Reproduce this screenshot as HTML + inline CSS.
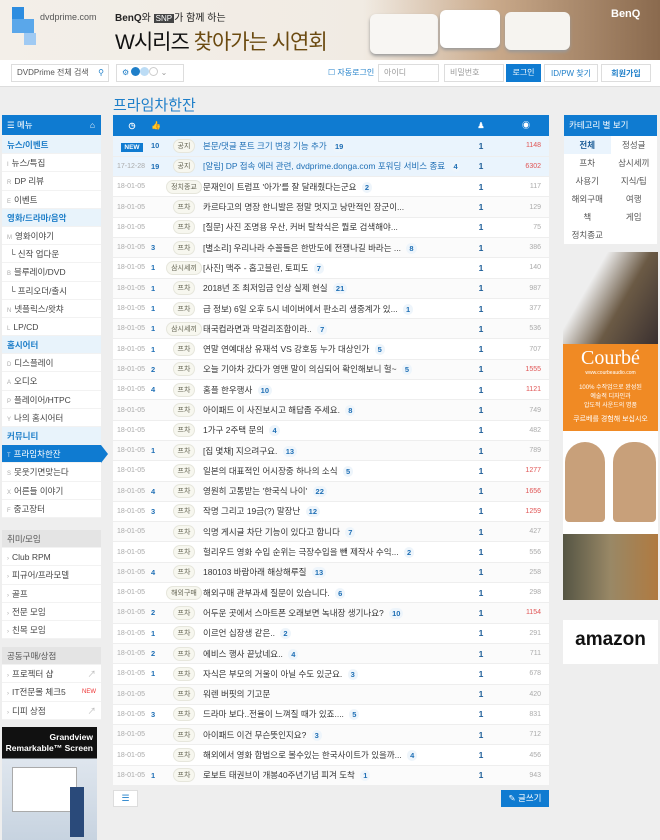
<!DOCTYPE html>
<html><head><meta charset="utf-8">
<style>
*{box-sizing:border-box;margin:0;padding:0}
body{width:660px;height:840px;overflow:hidden;background:#eee;font-family:"Liberation Sans","Noto Sans CJK KR",sans-serif;font-size:9px;color:#333;position:relative}
.abs{position:absolute}
#banner{left:0;top:0;width:660px;height:60px;background:linear-gradient(90deg,#f3efe9 0%,#f1ebe3 55%,#c9a98a 75%,#8a6a4e 100%)}
#bar{left:0;top:60px;width:660px;height:27px;background:#fff;border-bottom:1px solid #ddd}
.inp{position:absolute;top:64px;height:18px;border:1px solid #ddd;background:#fff;font-size:8px;color:#999;line-height:16px;padding-left:5px}
.btn{position:absolute;top:64px;height:18px;font-size:8px;line-height:18px;text-align:center}
.side{position:absolute;left:2px;width:99px;background:#fff}
.side div{height:18.2px;line-height:18px;padding-left:5px;font-size:8.5px;color:#444;border-bottom:1px solid #f2f2f2}
.side .sec{background:#e8f3fb;color:#1f7fc9;font-weight:bold}
.side .l{color:#aaa;font-size:6px;margin-right:3px}
.side .gh{background:#e4e4e4;color:#555}
table{border-collapse:collapse;width:436px;position:absolute;left:113px;top:115px;background:#fff;table-layout:fixed}
th{background:#0f7bd1;height:21px;color:#fff;font-size:8px}
td{height:20.3px;border-bottom:1px solid #eee;white-space:nowrap;overflow:hidden;font-size:8.5px}
tr:nth-child(odd) td{background:#fbfbfb}
tr.n td{background:#eaf4fd}
.d{color:#aaa;font-size:7px;padding-left:4px}
.r{color:#1f6fb5;font-weight:bold;font-size:7.5px}
.c{text-align:center}
.b{display:inline-block;border:1px solid #e6e6dc;background:#f7f7ef;border-radius:8px;font-size:7px;color:#665;padding:1px 4px}
.t{color:#333}
.cm{display:inline-block;background:#eef5fb;border-radius:7px;color:#1f6fb5;font-weight:bold;font-size:7.5px;padding:1px 3px;margin-left:3px}
.u{text-align:center;color:#1f5f99;font-weight:bold}
.v{text-align:right;padding-right:8px;color:#aaa;font-size:7px}
.hot{color:#e05555}
#cat{left:564px;top:115px;width:93px;background:#fff}
#cat .h{background:#0f7bd1;color:#fff;height:21px;line-height:21px;padding-left:5px;font-size:8.5px}
#cat .g{display:grid;grid-template-columns:1fr 1fr}
#cat .g div{height:18px;line-height:18px;text-align:center;font-size:8.5px;color:#555}
</style></head><body>
<div id="banner" class="abs">
 <div class="abs" style="left:12px;top:7px;width:12px;height:12px;background:#2d8de0"></div>
 <div class="abs" style="left:12px;top:19px;width:22px;height:14px;background:#5aa7ea"></div>
 <div class="abs" style="left:24px;top:33px;width:12px;height:12px;background:#9fcaf3"></div>
 <div class="abs" style="left:40px;top:12px;font-size:9px;color:#555">dvdprime.com</div>
 <div class="abs" style="left:115px;top:9px;font-size:10px;color:#222"><b>BenQ</b>와 <span style="background:#444;color:#fff;font-size:8px;padding:0 2px">SNP</span>가 함께 하는</div>
 <div class="abs" style="left:115px;top:26px;font-size:21px;color:#111;letter-spacing:-1px">W시리즈 <span style="color:#6b4a10">찾아가는 시연회</span></div>
 <div class="abs" style="left:370px;top:14px;width:68px;height:40px;background:#f8f6f3;border-radius:6px;box-shadow:0 2px 3px #999"></div>
 <div class="abs" style="left:440px;top:10px;width:60px;height:38px;background:#fff;border-radius:6px;box-shadow:0 2px 3px #999"></div>
 <div class="abs" style="left:505px;top:12px;width:65px;height:38px;background:#f6f4f0;border-radius:6px;box-shadow:0 2px 3px #999"></div>
 <div class="abs" style="left:611px;top:8px;font-size:11px;color:#fff;font-weight:bold">BenQ</div>
</div>
<div id="bar" class="abs"></div>
<div class="inp" style="left:11px;width:98px;color:#555">DVDPrime 전체 검색 <span style="color:#1f7fc9;float:right;margin-right:4px">&#9906;</span></div>
<div class="inp" style="left:116px;width:68px;color:#1f7fc9">⚙ <span style="display:inline-block;width:9px;height:9px;border-radius:5px;background:#1f7fc9;vertical-align:-1px"></span><span style="display:inline-block;width:9px;height:9px;border-radius:5px;background:#bcdcf5;vertical-align:-1px"></span><span style="display:inline-block;width:9px;height:9px;border-radius:5px;border:1px solid #ccc;vertical-align:-1px"></span> <span style="color:#999">⌄</span></div>
<div class="btn" style="left:328px;color:#1f7fc9">☐ 자동로그인</div>
<div class="inp" style="left:378px;width:61px">아이디</div>
<div class="inp" style="left:444px;width:60px">비밀번호</div>
<div class="btn" style="left:506px;width:35px;background:#0f7bd1;color:#fff">로그인</div>
<div class="btn" style="left:544px;width:54px;border:1px solid #ddd;color:#1f7fc9;background:#fff">ID/PW 찾기</div>
<div class="btn" style="left:601px;width:50px;border:1px solid #ddd;color:#1f7fc9;background:#fff;font-weight:bold">회원가입</div>
<div class="abs" style="left:113px;top:94px;font-size:15px;color:#1f7fc9">프라임차한잔</div>

<div class="side" style="top:115px">
 <div style="background:#0f7bd1;color:#fff;height:21px;line-height:21px">☰ 메뉴<span style="float:right;margin-right:6px">⌂</span></div>
 <div class="sec">뉴스/이벤트</div>
 <div><span class="l">I</span>뉴스/특집</div>
 <div><span class="l">R</span>DP 리뷰</div>
 <div><span class="l">E</span>이벤트</div>
 <div class="sec">영화/드라마/음악</div>
 <div><span class="l">M</span>영화이야기</div>
 <div>&nbsp;└ 신작 업다운</div>
 <div><span class="l">B</span>블루레이/DVD</div>
 <div>&nbsp;└ 프리오더/출시</div>
 <div><span class="l">N</span>넷플릭스/왓챠</div>
 <div><span class="l">L</span>LP/CD</div>
 <div class="sec">홈시어터</div>
 <div><span class="l">D</span>디스플레이</div>
 <div><span class="l">A</span>오디오</div>
 <div><span class="l">P</span>플레이어/HTPC</div>
 <div><span class="l">Y</span>나의 홈시어터</div>
 <div class="sec">커뮤니티</div>
 <div style="background:#0f7bd1;color:#fff;position:relative"><span class="l" style="color:#cde">T</span>프라임차한잔<span style="position:absolute;right:-7px;top:0;border-left:7px solid #0f7bd1;border-top:9px solid transparent;border-bottom:9px solid transparent"></span></div>
 <div><span class="l">S</span>못웃기면맞는다</div>
 <div><span class="l">X</span>어른들 이야기</div>
 <div><span class="l">F</span>중고장터</div>
</div>
<div class="side" style="top:530px">
 <div class="gh">취미/모임</div>
 <div><span class="l">›</span>Club RPM</div>
 <div><span class="l">›</span>피규어/프라모델</div>
 <div><span class="l">›</span>골프</div>
 <div><span class="l">›</span>전문 모임</div>
 <div><span class="l">›</span>친목 모임</div>
</div>
<div class="side" style="top:647px">
 <div class="gh">공동구매/상점</div>
 <div><span class="l">›</span>프로젝터 샵<span style="float:right;margin-right:5px;color:#bbb">↗</span></div>
 <div><span class="l">›</span>IT전문몰 체크5<span style="float:right;margin-right:5px;color:#e33;font-size:6px">NEW</span></div>
 <div><span class="l">›</span>디피 상점<span style="float:right;margin-right:5px;color:#bbb">↗</span></div>
</div>
<div class="abs" style="left:2px;top:727px;width:95px;height:113px;background:linear-gradient(#111 0,#111 28%,#dfe6ee 28%,#c7d3e0 100%)">
 <div style="color:#fff;font-size:8.5px;text-align:right;padding:5px 4px 0 0;line-height:11px;font-weight:bold">Grandview<br>Remarkable™ Screen</div>
 <div class="abs" style="left:10px;top:40px;width:65px;height:45px;background:#fff;border:1px solid #aaa"></div>
 <div class="abs" style="left:68px;top:60px;width:14px;height:50px;background:#2a4a7a"></div>
</div>

<table>
<colgroup><col style="width:38px"><col style="width:14px"><col style="width:38px"><col style="width:256px"><col style="width:44px"><col style="width:46px"></colgroup>
<tr><th>◷</th><th style="text-align:left">👍</th><th></th><th></th><th>♟</th><th>◉</th></tr>
<tr class="n"><td class="c"><span style="background:#0f7bd1;color:#fff;font-size:6.5px;padding:1px 3px;font-weight:bold">NEW</span></td><td class="r">10</td><td class="c"><span class="b">공지</span></td><td style="color:#1f6fb5">본문/댓글 폰트 크기 변경 기능 추가 <span class="cm">19</span></td><td class="u">1</td><td class="v hot">1148</td></tr>
<tr class="n"><td class="d">17-12-28</td><td class="r">19</td><td class="c"><span class="b">공지</span></td><td style="color:#1f6fb5">[알림] DP 접속 에러 관련, dvdprime.donga.com 포워딩 서비스 종료 <span class="cm">4</span></td><td class="u">1</td><td class="v hot">6302</td></tr>
<tr><td class="d">18-01-05</td><td class="r"></td><td class="c"><span class="b">정치종교</span></td><td class="t">문재인이 트럼프 '아가'를 잘 달래줬다는군요 <span class="cm">2</span></td><td class="u">1</td><td class="v">117</td></tr>
<tr><td class="d">18-01-05</td><td class="r"></td><td class="c"><span class="b">프차</span></td><td class="t">카르타고의 명장 한니발은 정말 멋지고 낭만적인 장군이...</td><td class="u">1</td><td class="v">129</td></tr>
<tr><td class="d">18-01-05</td><td class="r"></td><td class="c"><span class="b">프차</span></td><td class="t">[질문] 사진 조명용 우산, 커버 탈착식은 뭘로 검색해야...</td><td class="u">1</td><td class="v">75</td></tr>
<tr><td class="d">18-01-05</td><td class="r">3</td><td class="c"><span class="b">프차</span></td><td class="t">[별소리] 우리나라 수꼴들은 한반도에 전쟁나길 바라는 ... <span class="cm">8</span></td><td class="u">1</td><td class="v">386</td></tr>
<tr><td class="d">18-01-05</td><td class="r">1</td><td class="c"><span class="b">삼시세끼</span></td><td class="t">[사진] 맥주 - 홉고블린, 토피도 <span class="cm">7</span></td><td class="u">1</td><td class="v">140</td></tr>
<tr><td class="d">18-01-05</td><td class="r">1</td><td class="c"><span class="b">프차</span></td><td class="t">2018년 조 최저임금 인상 실제 현실 <span class="cm">21</span></td><td class="u">1</td><td class="v">987</td></tr>
<tr><td class="d">18-01-05</td><td class="r">1</td><td class="c"><span class="b">프차</span></td><td class="t">급 정보) 6일 오후 5시 네이버에서 판소리 생중계가 있... <span class="cm">1</span></td><td class="u">1</td><td class="v">377</td></tr>
<tr><td class="d">18-01-05</td><td class="r">1</td><td class="c"><span class="b">삼시세끼</span></td><td class="t">태국컵라면과 막걸리조합이라.. <span class="cm">7</span></td><td class="u">1</td><td class="v">536</td></tr>
<tr><td class="d">18-01-05</td><td class="r">1</td><td class="c"><span class="b">프차</span></td><td class="t">연말 연예대상 유재석 VS 강호동 누가 대상인가 <span class="cm">5</span></td><td class="u">1</td><td class="v">707</td></tr>
<tr><td class="d">18-01-05</td><td class="r">2</td><td class="c"><span class="b">프차</span></td><td class="t">오늘 기아차 갔다가 영맨 말이 의심되어 확인해보니 헐~ <span class="cm">5</span></td><td class="u">1</td><td class="v hot">1555</td></tr>
<tr><td class="d">18-01-05</td><td class="r">4</td><td class="c"><span class="b">프차</span></td><td class="t">홈플 한우행사 <span class="cm">10</span></td><td class="u">1</td><td class="v hot">1121</td></tr>
<tr><td class="d">18-01-05</td><td class="r"></td><td class="c"><span class="b">프차</span></td><td class="t">아이패드 이 사진보시고 해답좀 주세요. <span class="cm">8</span></td><td class="u">1</td><td class="v">749</td></tr>
<tr><td class="d">18-01-05</td><td class="r"></td><td class="c"><span class="b">프차</span></td><td class="t">1가구 2주택 문의 <span class="cm">4</span></td><td class="u">1</td><td class="v">482</td></tr>
<tr><td class="d">18-01-05</td><td class="r">1</td><td class="c"><span class="b">프차</span></td><td class="t">[집 몇채] 지으려구요. <span class="cm">13</span></td><td class="u">1</td><td class="v">789</td></tr>
<tr><td class="d">18-01-05</td><td class="r"></td><td class="c"><span class="b">프차</span></td><td class="t">일본의 대표적인 어시장중 하나의 소식 <span class="cm">5</span></td><td class="u">1</td><td class="v hot">1277</td></tr>
<tr><td class="d">18-01-05</td><td class="r">4</td><td class="c"><span class="b">프차</span></td><td class="t">영원히 고통받는 '한국식 나이' <span class="cm">22</span></td><td class="u">1</td><td class="v hot">1656</td></tr>
<tr><td class="d">18-01-05</td><td class="r">3</td><td class="c"><span class="b">프차</span></td><td class="t">작명 그리고 19금(?) 말장난 <span class="cm">12</span></td><td class="u">1</td><td class="v hot">1259</td></tr>
<tr><td class="d">18-01-05</td><td class="r"></td><td class="c"><span class="b">프차</span></td><td class="t">익명 게시글 차단 기능이 있다고 합니다 <span class="cm">7</span></td><td class="u">1</td><td class="v">427</td></tr>
<tr><td class="d">18-01-05</td><td class="r"></td><td class="c"><span class="b">프차</span></td><td class="t">헐리우드 영화 수입 순위는 극장수입을 뺀 제작사 수익... <span class="cm">2</span></td><td class="u">1</td><td class="v">556</td></tr>
<tr><td class="d">18-01-05</td><td class="r">4</td><td class="c"><span class="b">프차</span></td><td class="t">180103 바람아래 해상해루질 <span class="cm">13</span></td><td class="u">1</td><td class="v">258</td></tr>
<tr><td class="d">18-01-05</td><td class="r"></td><td class="c"><span class="b">해외구매</span></td><td class="t">해외구매 관부과세 질문이 있습니다. <span class="cm">6</span></td><td class="u">1</td><td class="v">298</td></tr>
<tr><td class="d">18-01-05</td><td class="r">2</td><td class="c"><span class="b">프차</span></td><td class="t">어두운 곳에서 스마트폰 오래보면 녹내장 생기나요? <span class="cm">10</span></td><td class="u">1</td><td class="v hot">1154</td></tr>
<tr><td class="d">18-01-05</td><td class="r">1</td><td class="c"><span class="b">프차</span></td><td class="t">이르언 십장생 같은.. <span class="cm">2</span></td><td class="u">1</td><td class="v">291</td></tr>
<tr><td class="d">18-01-05</td><td class="r">2</td><td class="c"><span class="b">프차</span></td><td class="t">에비스 행사 끝났네요.. <span class="cm">4</span></td><td class="u">1</td><td class="v">711</td></tr>
<tr><td class="d">18-01-05</td><td class="r">1</td><td class="c"><span class="b">프차</span></td><td class="t">자식은 부모의 거울이 아닐 수도 있군요. <span class="cm">3</span></td><td class="u">1</td><td class="v">678</td></tr>
<tr><td class="d">18-01-05</td><td class="r"></td><td class="c"><span class="b">프차</span></td><td class="t">워렌 버핏의 기고문</td><td class="u">1</td><td class="v">420</td></tr>
<tr><td class="d">18-01-05</td><td class="r">3</td><td class="c"><span class="b">프차</span></td><td class="t">드라마 보다..전율이 느껴질 때가 있죠.... <span class="cm">5</span></td><td class="u">1</td><td class="v">831</td></tr>
<tr><td class="d">18-01-05</td><td class="r"></td><td class="c"><span class="b">프차</span></td><td class="t">아이패드 이건 무슨뜻인지요? <span class="cm">3</span></td><td class="u">1</td><td class="v">712</td></tr>
<tr><td class="d">18-01-05</td><td class="r"></td><td class="c"><span class="b">프차</span></td><td class="t">해외에서 영화 합법으로 볼수있는 한국사이트가 있을까... <span class="cm">4</span></td><td class="u">1</td><td class="v">456</td></tr>
<tr><td class="d">18-01-05</td><td class="r">1</td><td class="c"><span class="b">프차</span></td><td class="t">로보트 태권브이 개봉40주년기념 피겨 도착 <span class="cm">1</span></td><td class="u">1</td><td class="v">943</td></tr>
</table>
<div class="abs" style="left:113px;top:790px;width:25px;height:17px;background:#fff;border:1px solid #ddd;color:#1f7fc9;text-align:center;line-height:15px;font-size:9px">☰</div>
<div class="abs" style="left:501px;top:790px;width:48px;height:17px;background:#0f7bd1;color:#fff;text-align:center;line-height:17px;font-size:8.5px">✎ 글쓰기</div>

<div id="cat" class="abs">
 <div class="h">카테고리 별 보기</div>
 <div class="g">
  <div style="background:#eaf4fd;color:#1f5f99;font-weight:bold">전체</div><div>정성글</div>
  <div>프차</div><div>삼시세끼</div>
  <div>사용기</div><div>지식/팁</div>
  <div>해외구매</div><div>여행</div>
  <div>책</div><div>게임</div>
  <div>정치종교</div><div></div>
 </div>
</div>
<div class="abs" style="left:563px;top:252px;width:95px;height:348px;background:#fff">
 <div class="abs" style="left:0;top:0;width:95px;height:92px;background:linear-gradient(120deg,#eee 30%,#6b5a45 60%,#3a3030)"></div>
 <div class="abs" style="left:0;top:92px;width:95px;height:87px;background:#f08a24;color:#fff;text-align:center">
  <div style="font-family:'Liberation Serif',serif;font-size:20px;margin-top:3px">Courbé</div>
  <div style="font-size:5px">www.courbeaudio.com</div>
  <div style="font-size:6px;margin-top:8px;line-height:9px">100% 수작업으로 완성된<br>예술적 디자인과<br>압도적 사운드의 명품</div>
  <div style="font-size:7px;margin-top:3px">쿠르베를 경험해 보십시오</div>
 </div>
 <div class="abs" style="left:2px;top:190px;width:40px;height:80px;background:#c8a07a;border-radius:20px 20px 4px 4px"></div>
 <div class="abs" style="left:50px;top:190px;width:43px;height:80px;background:#c8a07a;border-radius:20px 20px 4px 4px"></div>
 <div class="abs" style="left:0;top:282px;width:95px;height:66px;background:linear-gradient(90deg,#554 0,#998866 50%,#b07a40 100%)"></div>
</div>
<div class="abs" style="left:563px;top:620px;width:95px;height:44px;background:#fff;text-align:center;font-size:19px;font-weight:bold;color:#111;line-height:40px">amazon</div>
</body></html>
